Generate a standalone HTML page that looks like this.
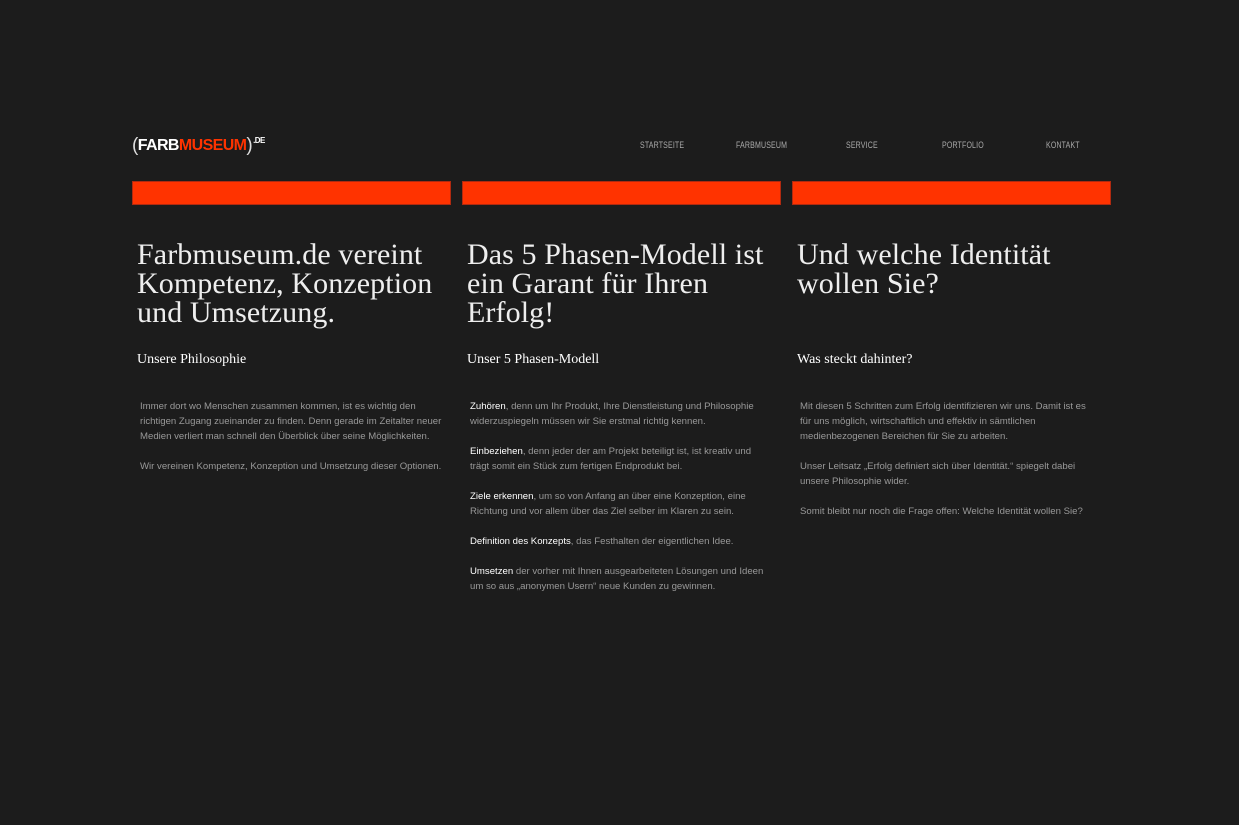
<!DOCTYPE html>
<html><head><meta charset="utf-8">
<style>
html,body{margin:0;padding:0;background:#1c1c1c;width:1239px;height:825px;overflow:hidden}
body{position:relative;font-family:"Liberation Sans",sans-serif}
.logo{position:absolute;left:132px;top:134px;font-weight:bold;font-size:16px;letter-spacing:-0.6px;color:#fff;white-space:nowrap}
.logo .p{font-weight:normal;color:#ddd;font-size:19px;position:relative;top:1px}
.logo .m{color:#ff3300}
.logo .de{font-size:8px;position:relative;top:-7px;margin-left:1px}
.nav{position:absolute;top:140px;font-size:9px;color:#aaa;letter-spacing:0.2px;transform:scaleX(0.78);transform-origin:left}
.bar{position:absolute;top:181px;width:317px;height:22px;background:#ff3300;border:1px solid #b02a10}
.col{position:absolute;top:240px;width:320px}
h1{margin:0;font-family:"Liberation Serif",serif;font-weight:normal;font-size:30px;line-height:29px;color:#eee;height:110px;letter-spacing:0.1px;width:312px}
h2{margin:0;font-family:"Liberation Serif",serif;font-weight:normal;font-size:14px;color:#fff;position:absolute;top:112px}
.txt{position:absolute;top:159px;left:3px;font-size:9.6px;line-height:15px;color:#999;width:302px}
.txt b{font-weight:normal;color:#fff}
</style></head><body>
<div class="logo"><span class="p">(</span>FARB<span class="m">MUSEUM</span><span class="p">)</span><span class="de">.DE</span></div>
<div class="nav" style="left:640px">STARTSEITE</div>
<div class="nav" style="left:736px">FARBMUSEUM</div>
<div class="nav" style="left:846px">SERVICE</div>
<div class="nav" style="left:942px">PORTFOLIO</div>
<div class="nav" style="left:1046px">KONTAKT</div>
<div class="bar" style="left:132px"></div>
<div class="bar" style="left:462px"></div>
<div class="bar" style="left:792px"></div>
<div class="col" style="left:137px">
<h1>Farbmuseum.de vereint Kompetenz, Konzeption und Umsetzung.</h1>
<h2>Unsere Philosophie</h2>
<div class="txt">Immer dort wo Menschen zusammen kommen, ist es wichtig den richtigen Zugang zueinander zu finden. Denn gerade im Zeitalter neuer Medien verliert man schnell den Überblick über seine Möglichkeiten.<br><br>Wir vereinen Kompetenz, Konzeption und Umsetzung dieser Optionen.</div>
</div>
<div class="col" style="left:467px">
<h1>Das 5 Phasen-Modell ist ein Garant für Ihren Erfolg!</h1>
<h2>Unser 5 Phasen-Modell</h2>
<div class="txt"><b>Zuhören</b>, denn um Ihr Produkt, Ihre Dienstleistung und Philosophie widerzuspiegeln müssen wir Sie erstmal richtig kennen.<br><br><b>Einbeziehen</b>, denn jeder der am Projekt beteiligt ist, ist kreativ und trägt somit ein Stück zum fertigen Endprodukt bei.<br><br><b>Ziele erkennen</b>, um so von Anfang an über eine Konzeption, eine Richtung und vor allem über das Ziel selber im Klaren zu sein.<br><br><b>Definition des Konzepts</b>, das Festhalten der eigentlichen Idee.<br><br><b>Umsetzen</b> der vorher mit Ihnen ausgearbeiteten Lösungen und Ideen um so aus „anonymen Usern“ neue Kunden zu gewinnen.</div>
</div>
<div class="col" style="left:797px">
<h1>Und welche Identität wollen Sie?</h1>
<h2>Was steckt dahinter?</h2>
<div class="txt" style="width:294px">Mit diesen 5 Schritten zum Erfolg identifizieren wir uns. Damit ist es für uns möglich, wirtschaftlich und effektiv in sämtlichen medienbezogenen Bereichen für Sie zu arbeiten.<br><br>Unser Leitsatz „Erfolg definiert sich über Identität.“ spiegelt dabei unsere Philosophie wider.<br><br>Somit bleibt nur noch die Frage offen: Welche Identität wollen Sie?</div>
</div>
</body></html>
